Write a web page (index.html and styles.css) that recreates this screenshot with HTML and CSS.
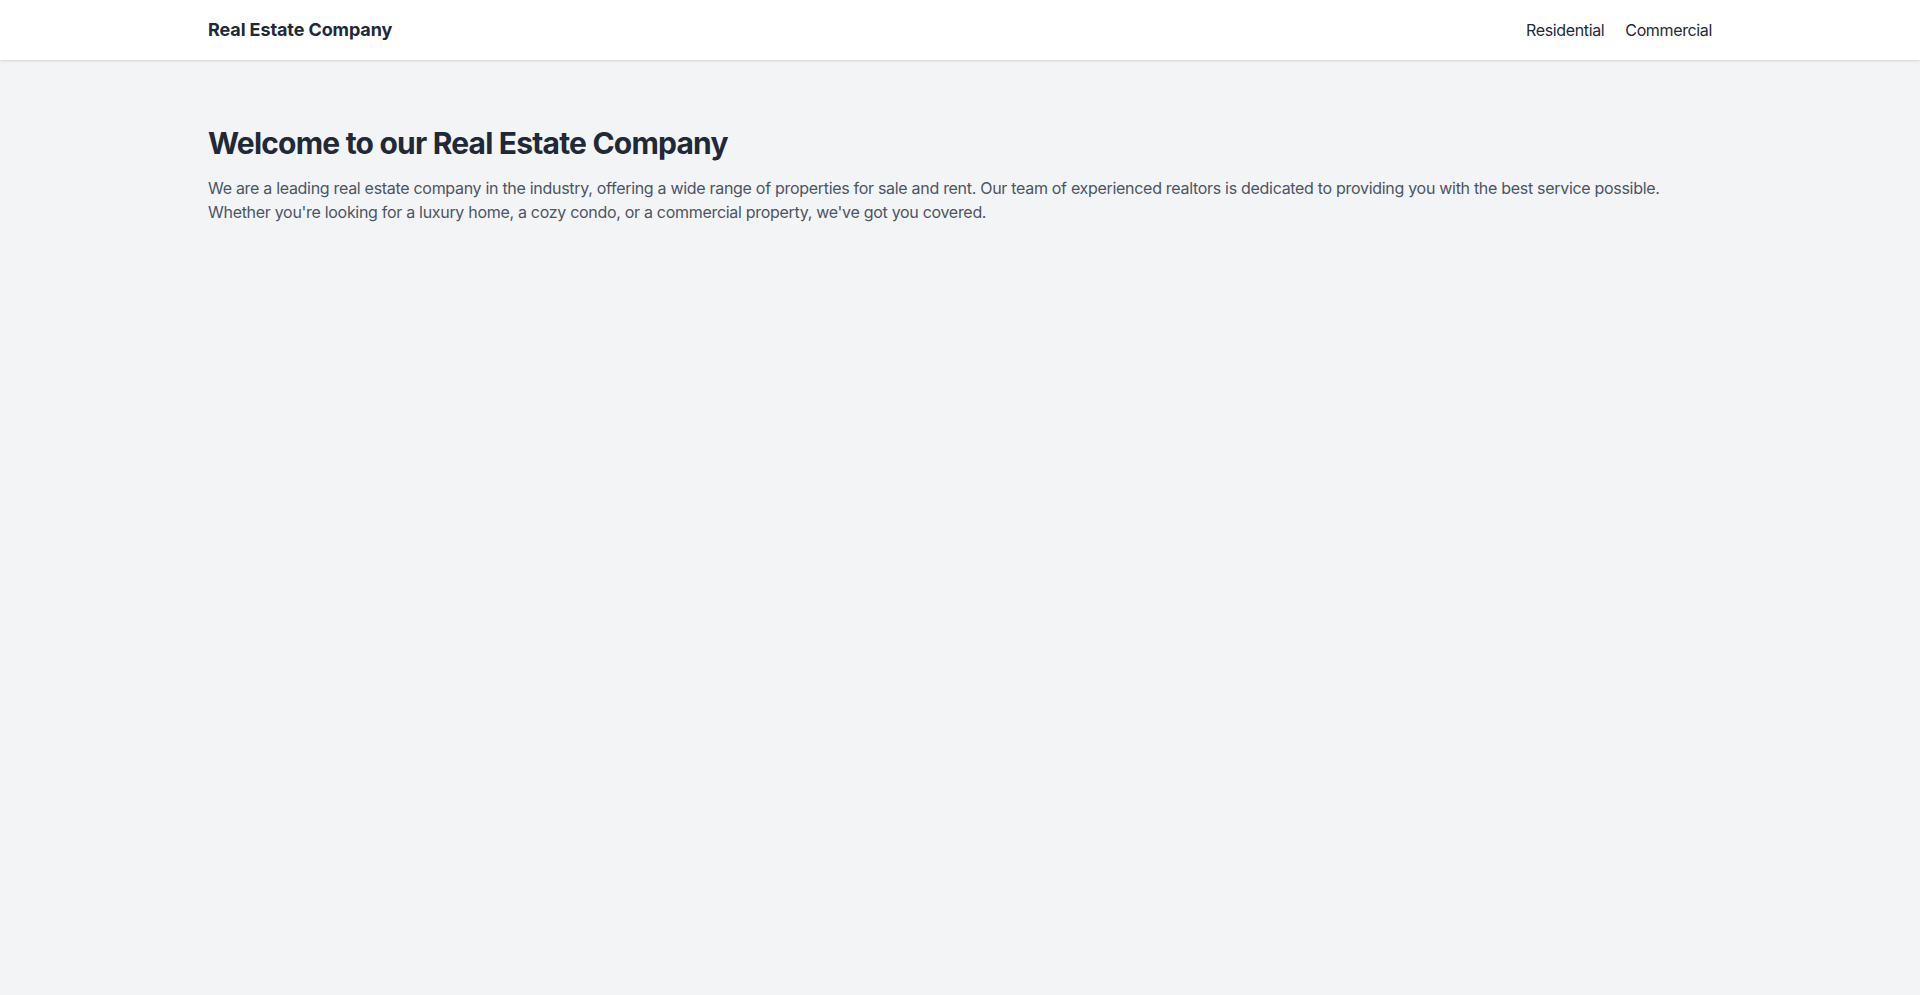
FILE: index.html
```html
<!DOCTYPE html>
<html lang="en">
<head>
<meta charset="utf-8">
<title>Real Estate Company</title>
<link rel="stylesheet" href="styles.css">
</head>
<body>
<header class="site-header">
  <div class="container header-inner">
    <div class="brand">Real Estate Company</div>
    <nav class="nav">
      <a href="#" class="nav-link">Residential</a>
      <a href="#" class="nav-link">Commercial</a>
    </nav>
  </div>
</header>
<main class="main">
  <div class="container">
    <h1 class="title">Welcome to our Real Estate Company</h1>
    <p class="intro">We are a leading real estate company in the industry, offering a wide range of properties for sale and rent. Our team of experienced realtors is dedicated to providing you with the best service possible. Whether you're looking for a luxury home, a cozy condo, or a commercial property, we've got you covered.</p>
  </div>
</main>
</body>
</html>
```

FILE: styles.css
```css
* { box-sizing: border-box; }
html, body { margin: 0; padding: 0; }
body {
  font-family: Inter, "Noto Sans", sans-serif;
  background: #f3f4f6;
  color: #1f2937;
  min-height: 100vh;
}
.container {
  max-width: 1536px;
  margin: 0 auto;
  padding: 0 16px;
}
.site-header {
  background: #ffffff;
  box-shadow: 0 1px 3px 0 rgba(0,0,0,0.1), 0 1px 2px -1px rgba(0,0,0,0.1);
}
.header-inner {
  display: flex;
  justify-content: space-between;
  align-items: center;
  padding-top: 16px;
  padding-bottom: 16px;
}
.brand {
  font-size: 18px;
  line-height: 28px;
  font-weight: 700;
  color: #1f2937;
  letter-spacing: -0.1px;
}
.nav {
  display: flex;
  gap: 21px;
}
.nav-link {
  font-size: 16px;
  line-height: 24px;
  color: #1f2937;
  text-decoration: none;
  letter-spacing: -0.36px;
}
.main {
  padding: 65px 0 64px;
}
.title {
  margin: 0 0 15px;
  font-size: 30px;
  line-height: 36px;
  font-weight: 700;
  color: #1f2937;
  letter-spacing: -0.8px;
}
.intro {
  margin: 0;
  font-size: 16px;
  line-height: 24px;
  color: #4b5563;
  letter-spacing: -0.3px;
}
```
